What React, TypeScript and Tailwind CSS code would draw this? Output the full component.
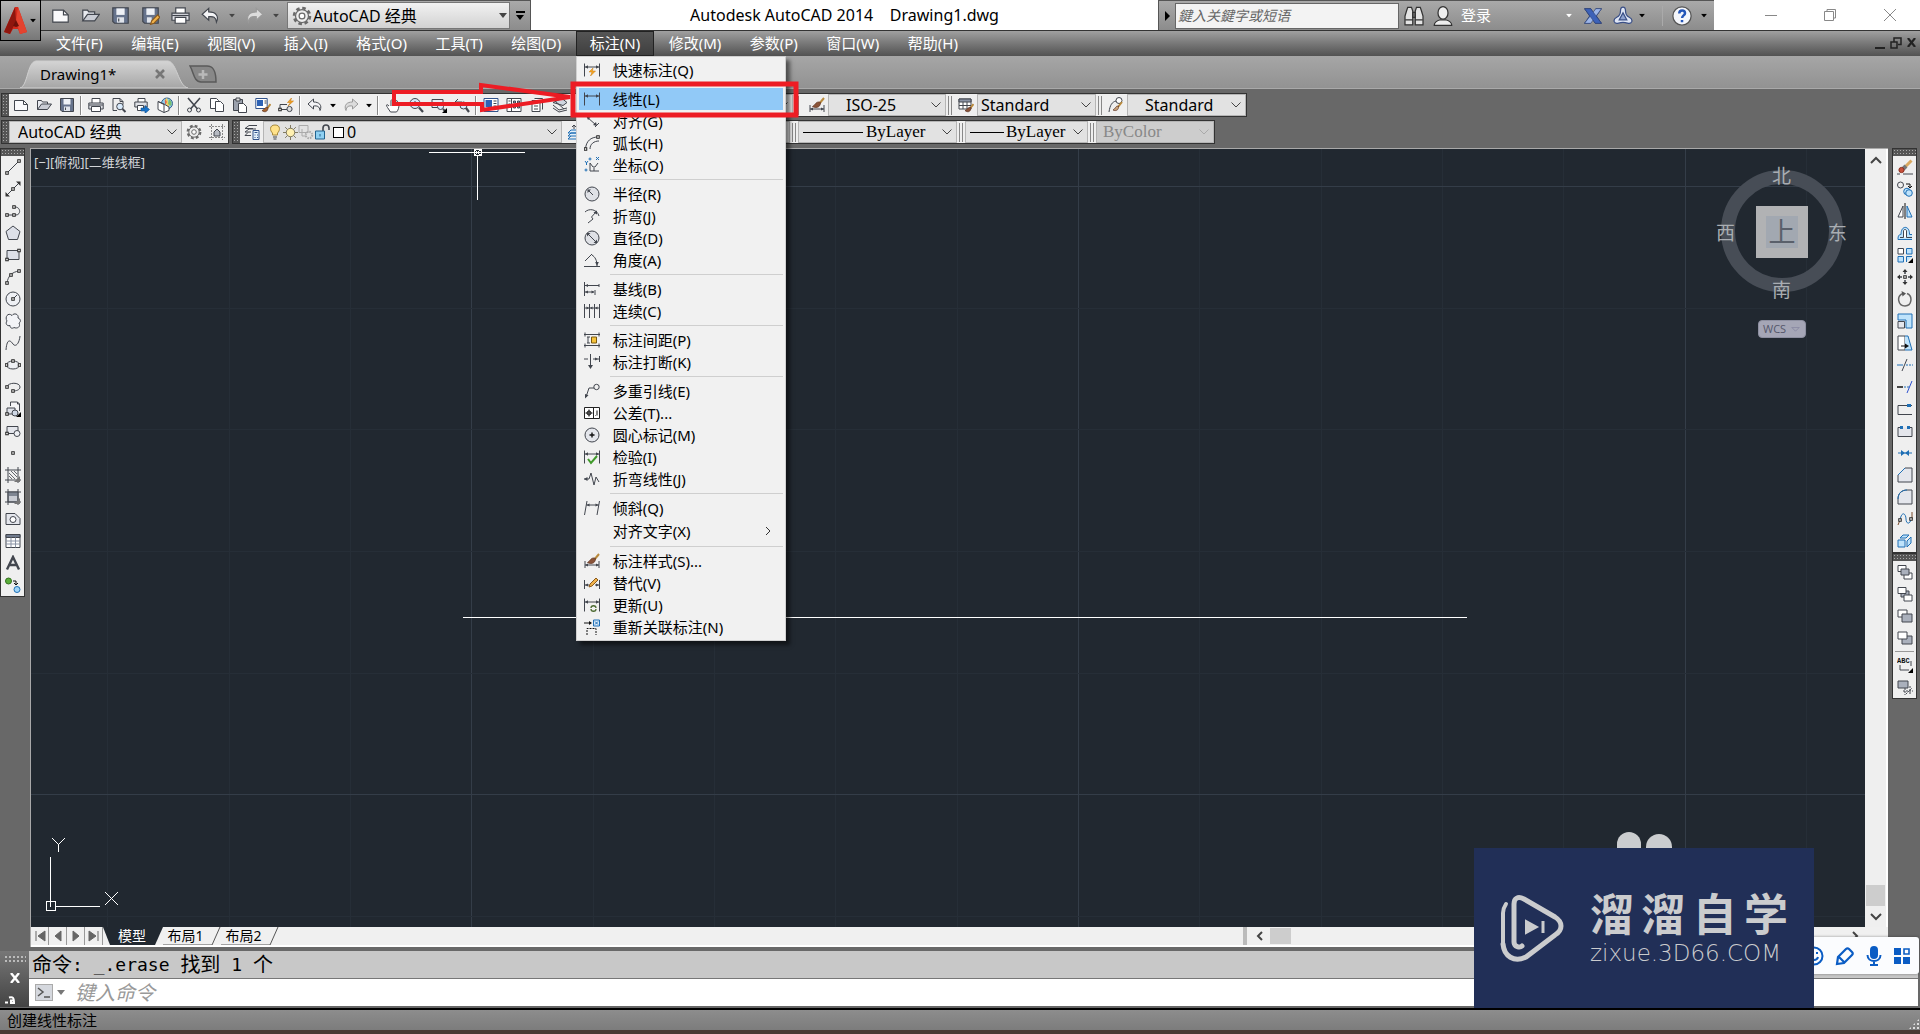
import React from "react";

const K = "#42464e";
const B = "#1f6fb5";
const L = "#bfe3fb";

const Node = ({ x, y }: { x: number; y: number }) => (
  <rect x={x - 1.25} y={y - 1.25} width="2.5" height="2.5" fill="#fff" stroke="#222" strokeWidth="1" />
);

const pageShape = <path d="M1.5 3.5h9l4 4v6h-13z" fill="#fafafc" />;
const dimBars = <path d="M.5 1.500v13M15.500 1.500v13M1 5h14" />;
const dimTips = <path d="M1 5l3-1.800v3.600zM15 5l-3-1.800v3.600z" fill={K} stroke="none" />;
const brush = (
  <>
    <path d="M15 1l-5 6" stroke="#b98a3c" strokeWidth="2" />
    <path d="M11.500 5.500c-4-2-5 2-8 4 2 1.500 8 2 8-4z" fill="#8a5338" stroke="#5d3422" strokeWidth=".7" />
  </>
);

const icons: Record<string, React.ReactNode> = {
  new: (
    <>
      {pageShape}
      <path d="M10.500 3.500v4h4" />
    </>
  ),
  open: (
    <>
      <path d="M1.500 12.500v-9h4l1 1.500h5v2" fill="#e9ebf0" />
      <path d="M1.500 12.500l4-5.500h10l-4 5.500z" fill="#c9ccd4" />
    </>
  ),
  save: (
    <>
      <path d="M1.500 1.500h13v13H3l-1.500-1.500z" fill="#66738c" />
      <path d="M4.500 2h7v5.500h-7z" fill="#eef1f6" stroke="none" />
      <path d="M5 9.500h6V14H5z" fill="#dfe3ea" stroke="none" />
      <path d="M6.500 10.500v2.500" />
    </>
  ),
  saveas: (
    <>
      <path d="M1.500 1.500h13v13H3l-1.500-1.500z" fill="#66738c" />
      <path d="M4.500 2h7v5.500h-7z" fill="#eef1f6" stroke="none" />
      <path d="M5 9.500h4V14H5z" fill="#dfe3ea" stroke="none" />
      <path d="M8 15.500l1-3 5-5 2 2-5 5z" fill="#f0b24a" stroke="#8a5a1e" />
    </>
  ),
  print: (
    <>
      <path d="M4 6V1.500h8V6" fill="#fff" />
      <path d="M.8 6h14.400v6H.8z" fill="#dfe1e6" />
      <path d="M3.500 9.500h9v5h-9z" fill="#fff" />
      <path d="M1 8h14" />
    </>
  ),
  preview: (
    <>
      <path d="M2 1.500h7l3 3v3M2 1.500v12h4" fill="none" />
      <path d="M9 1.500v3h3" />
      <circle cx="9" cy="9.500" r="3.300" fill="#d8eafb" />
      <path d="M11.500 12l3 3" strokeWidth="2" />
    </>
  ),
  publish: (
    <>
      <path d="M4 5V1.500h7V5" fill="#fff" />
      <path d="M.8 5h12.400v5H.8z" fill="#dfe1e6" />
      <path d="M3.500 8.500h6v5h-6z" fill="#fff" />
      <path d="M7 11h4V8.500l4.500 4-4.500 4V14H7z" fill="#1873c9" stroke="#0f4f8f" strokeWidth=".6" />
    </>
  ),
  globe: (
    <>
      <circle cx="10" cy="6.500" r="5.500" fill="#8cc9f2" stroke="#36648c" />
      <path d="M10 1c-3 2-3 4-1 5l1 5c4-1 2-4 0-10z" fill="#f0d060" stroke="none" />
      <path d="M12 2c3 2 3 5 2 7l-3-2z" fill="#78bf70" stroke="none" />
      <path d="M8 2l2 3-2 3z" fill="#e0654a" stroke="none" />
      <path d="M1 4.500l6 2.500 5 3v3.500L7 15.500 1 12.500z" fill="#fff" />
      <path d="M1 4.500l6 3v8" />
    </>
  ),
  cut: (
    <>
      <path d="M2 1l9.500 11M14 1L4.500 12" strokeWidth="1.600" />
      <circle cx="3.500" cy="13" r="2" />
      <circle cx="12.500" cy="13" r="2" />
    </>
  ),
  copy: (
    <>
      <path d="M1.500 1.500h6l2 2v8h-8z" fill="#fff" />
      <path d="M6.500 4.500h5l3 3v7h-8z" fill="#fff" />
    </>
  ),
  paste: (
    <>
      <path d="M1.500 2.500h9v11h-9z" fill="#9aa0ac" />
      <path d="M4 1h4v3H4z" fill="#ddd" />
      <path d="M6.500 6.500h5l3 3v6h-8z" fill="#fff" />
    </>
  ),
  match: (
    <>
      <path d="M.8 1.500h11.400v10H.8z" fill="#fff" stroke="#31528a" />
      <path d="M2 3h6v6H2z" fill="#2d62b5" stroke="none" />
      <path d="M9.500 4h2M9.500 6h2" />
      <path d="M15.500 7l-3 4" stroke="#b98a3c" strokeWidth="2" />
      <path d="M13 10.500c-3-1-3 2-6 3 2 2 6 2 6-3z" fill="#a8642f" stroke="#5d3422" strokeWidth=".7" />
    </>
  ),
  block: (
    <>
      <path d="M2 12.500V7.500h7" />
      <path d="M2 12.500h8" />
      <circle cx="11.500" cy="12" r="2.600" fill="#ddd" />
      <Node x={2} y={12.5} />
      <path d="M13.500 1l-4 4.500h3L10 9l5.500-5h-3z" fill="#f5a623" stroke="#c97a10" strokeWidth=".6" />
    </>
  ),
  undo: <path d="M6.500 2L1 7l5.500 5V9c4-.5 6 .5 6.500 4.500C15.500 8 12 5 6.500 5z" fill="#f4f4f6" />,
  redo: <path d="M9.500 2L15 7l-5.500 5V9c-4-.5-6 .5-6.500 4.500C.5 8 4 5 9.500 5z" fill="#dcdcdc" stroke="#9a9a9a" />,
  pan: <path d="M4 9L2 7.500C1 8 1.500 9 2.500 10.500l3 4.500h6c2-2 2.500-5 2.500-8-1-1-1.700 0-1.700 1.500V4c-1-1-1.800 0-1.800 1v2V2.500c-1-1-1.800 0-1.800 1V7L8 3C7 2 6 3 6 4v5" fill="#fff" />,
  zoomrt: (
    <>
      <circle cx="7" cy="6.500" r="5" fill="#d8eafb" />
      <path d="M11 10.500l4 4.500" strokeWidth="2.200" />
      <path d="M4.500 6.500h5M7 4v5" />
    </>
  ),
  zoomwin: (
    <>
      <path d="M1 2.500h11v8H1z" fill="#e9eef5" />
      <circle cx="9.500" cy="9.500" r="3" fill="#d8eafb" />
      <path d="M12 12l2 2" strokeWidth="2" />
      <path d="M16 11v5h-5z" fill="#000" stroke="none" />
    </>
  ),
  zoomprev: (
    <>
      <path d="M4 2L1 5l3 3M1 5h7" />
      <circle cx="9.500" cy="8.500" r="3.500" fill="#d8eafb" />
      <path d="M12 11l3 4" strokeWidth="2.200" />
    </>
  ),
  props: (
    <>
      <path d="M1 1.500h14v13H1z" fill="#fff" stroke="#31528a" />
      <path d="M2.500 3h6.500v7H2.500z" fill="#2d62b5" stroke="none" />
      <path d="M10.500 4h3M10.500 6.500h3M10.500 9h3M3 12h10" />
    </>
  ),
  dcenter: (
    <>
      <path d="M1 1.500h14v13H1z" fill="#fff" />
      <path d="M5.500 1.500v13M2.500 4h2M2.500 7h2M2.500 10h2" />
      <path d="M7.500 4h2v2h-2zM11.500 4h2v2h-2zM7.500 9h2v2h-2zM11.500 9h2v2h-2z" fill="#9ab" />
    </>
  ),
  palette: (
    <>
      <path d="M3 3.500h8v11H3zM5.500 1.500h8v11" fill="#fff" />
      <path d="M5 6h4M5 9h4M5 12h4" />
    </>
  ),
  sheet: (
    <>
      <path d="M1 5.500l9-4 5 4-4 3z" fill="#cfd6e0" />
      <path d="M1 8l6 5 8-2M1 11l6 4 8-2M3 4l9 8" />
    </>
  ),
  help: (
    <>
      <circle cx="8" cy="8" r="6.500" fill="#fff" />
      <path d="M6 6.500c0-3 4-3 4-.5 0 1.500-2 1.500-2 3.500M8 11v1.500" stroke={B} strokeWidth="1.700" />
    </>
  ),
  dimstyle: (
    <>
      <path d="M1 8v7M15 8v7M1 12h14" />
      <path d="M1 12l3-1.600v3.200zM15 12l-3-1.600v3.200z" fill={K} stroke="none" />
      {brush}
    </>
  ),
  tablestyle: (
    <>
      <path d="M1 2h12v10H1z" fill="#fff" />
      <path d="M1 2h12v3H1z" fill="#8a93a5" />
      <path d="M1 8.500h12M5 5v7M9 5v7" />
      <path d="M15.500 7l-3 4" stroke="#b98a3c" strokeWidth="2" />
      <path d="M13 10.500c-3-1-3 2-6 3 2 2 6 2 6-3z" fill="#8a5338" stroke="#5d3422" strokeWidth=".7" />
    </>
  ),
  leaderstyle: (
    <>
      <path d="M1 15C2 8 4 5 8 4" />
      <circle cx="11" cy="3.500" r="3" fill="#fff" />
      <path d="M14 5l-4 5" stroke="#b98a3c" strokeWidth="2" />
      <path d="M10.500 9c-3-.5-3 3-5.500 4 3 1.500 6 0 5.500-4z" fill="#c9a27a" stroke="#5d3422" strokeWidth=".7" />
    </>
  ),
  gear: (
    <>
      <circle cx="8" cy="8" r="6.300" fill="none" stroke="#6a6a6a" strokeWidth="2.200" strokeDasharray="2.800 2.150" />
      <circle cx="8" cy="8" r="5.200" fill="#eee" stroke="#6a6a6a" />
      <circle cx="8" cy="8" r="2.300" fill="#fff" stroke="#6a6a6a" />
    </>
  ),
  wsbox: (
    <>
      <path d="M2.500 0v16M13.500 0v16M0 2.500h16M0 13.500h16" stroke="#888" strokeDasharray="2 1" />
      <path d="M5 8l3-3 3 3v4H5z" fill="#b6bac2" />
    </>
  ),
  layers: (
    <>
      <path d="M1 4.500l4-3h8M1 4.500h8M1 8l4-3h7M1 8h6M1 11.500l3-3M1 11.500h6" />
      <path d="M9 6.500h6v9H9z" fill="#e4f1fb" stroke="#31528a" />
      <path d="M10.500 8.500h3M10.500 11h1M13 11h1M10.500 13.500h1M13 13.500h1" stroke="#31528a" />
    </>
  ),
  layerprev: (
    <>
      <path d="M2 12l3-3h9l-3 3zM2 15l3-3M14 12l-3 3H2M2 9l3-3h9l-3 3z" stroke={B} fill="#e4f1fb" />
      <path d="M8 1v4M6 3l2-2 2 2" />
    </>
  ),
  bulb: (
    <>
      <path d="M8 1c-6 0-5 6-2.500 8v2h5V9C13 7 14 1 8 1z" fill="#ffe28a" stroke="#a88a3c" />
      <path d="M6 13h4M6.500 15h3" />
    </>
  ),
  sun: (
    <>
      <path d="M8 0v16M0 8h16M2.300 2.300l11.400 11.400M13.700 2.300L2.300 13.700" stroke="#7a735a" />
      <circle cx="8" cy="8" r="4.500" fill="#fff0b0" stroke="#7a735a" />
    </>
  ),
  vpfreeze: (
    <>
      <path d="M1 1.500h9v7H1zM4 5v7h4" stroke="#aaa" />
      <circle cx="11" cy="11" r="3.200" stroke="#aaa" strokeWidth="2" strokeDasharray="1.500 1" />
    </>
  ),
  lock: (
    <>
      <path d="M9 7V4c0-4 6-4 6 0v2" strokeWidth="1.600" />
      <path d="M1.500 7h9v8h-9z" fill="#8fd0f2" stroke="#22638f" />
      <path d="M6 10v2.500" stroke="#22638f" />
    </>
  ),
  line: (
    <>
      <path d="M2 14L14 2" />
      <Node x={2} y={14} />
      <Node x={14} y={2} />
    </>
  ),
  xline: (
    <>
      <path d="M1 15L15 1" />
      <path d="M.5 15.500v-4.500l4.500 4.500zM15.500.5v4.500L11 .5z" fill="#333" stroke="none" />
      <Node x={8} y={8} />
    </>
  ),
  pline: (
    <>
      <path d="M2 12h9c5 0 5-8-1-8" />
      <Node x={2} y={12} />
      <Node x={9} y={12} />
      <Node x={9} y={4} />
    </>
  ),
  polygon: <path d="M8 1l7 5.500-2.500 8h-9L1 6.500z" fill="#dde0e8" />,
  rect: (
    <>
      <path d="M2 3.500h12v9H2z" fill="#dde0e8" />
      <Node x={2} y={12.5} />
      <Node x={14} y={3.5} />
    </>
  ),
  arc: (
    <>
      <path d="M2 14C3 7 7 3 14 2" />
      <Node x={2} y={14} />
      <Node x={6} y={6} />
      <Node x={14} y={2} />
    </>
  ),
  circle: (
    <>
      <circle cx="8" cy="8" r="7" fill="#eef0f4" />
      <path d="M8 8l4-4" />
      <Node x={8} y={8} />
    </>
  ),
  cloud: <path d="M7 2.500C9-.5 14 1 13 5c3 1 3 4 1 5 2 4-2 6-5 4.500-2 1.500-4 .5-4-2-3 1-5-2-3-4.500C-.5 4 3-1 7 2.500z" fill="#f3f4f7" />,
  spline: <path d="M1 15C2 2 6 6 8 9s6 1 7-8" />,
  ellipse: (
    <>
      <ellipse cx="8" cy="8" rx="6.500" ry="4" fill="#eef0f4" />
      <Node x={1.5} y={8} />
      <Node x={14.5} y={8} />
      <Node x={8} y={4} />
    </>
  ),
  ellarc: (
    <>
      <path d="M2 8c1-5 13-5 13 0 0 3-4 4-7 4" />
      <Node x={2} y={8} />
      <Node x={8} y={12} />
    </>
  ),
  insblock: (
    <>
      <path d="M5.500 5V1h7l2 2v7M12.500 1v2h2" fill="#f4f4f6" />
      <path d="M2 7h8v6H2z" fill="#dde0e8" />
      <circle cx="10" cy="12" r="3" fill="#cfd8e6" />
      <Node x={2} y={13} />
      <path d="M16 11v5h-5z" fill="#000" stroke="none" />
    </>
  ),
  mkblock: (
    <>
      <path d="M2 3.500h11v7H2z" fill="#e4e6ec" />
      <circle cx="12" cy="10.500" r="3" fill="#eef0f4" />
      <Node x={2} y={10.5} />
    </>
  ),
  point: <Node x={8} y={8} />,
  hatch: (
    <>
      <path d="M3 0v16M0 3h16M13 0v16M0 13h16" />
      <path d="M4 6l6 6M4 9l3 3M6 4l6 6M9 4l3 3" strokeWidth=".8" />
      <path d="M15 9v6H9z" fill="#777" stroke="none" />
    </>
  ),
  gradient: (
    <>
      <path d="M3 3h10v10H3z" fill="#c9ccd3" />
      <path d="M3 3h10v4H3z" fill="#7f8692" stroke="none" />
      <path d="M3 0v16M0 3h16M13 0v16M0 13h16" />
      <path d="M15 9v6H9z" fill="#777" stroke="none" />
    </>
  ),
  region: (
    <>
      <path d="M1 2.500h9l5 5v6H1z" fill="#e4e6ec" />
      <circle cx="8" cy="8.500" r="3" fill="#fff" />
    </>
  ),
  table: (
    <>
      <path d="M1 1.500h14v13H1z" fill="#fff" />
      <path d="M1 1.500h14v3H1z" fill="#707a8c" />
      <path d="M1 8h14M1 11h14M6 4.500v10M10.500 4.500v10" stroke="#8a93a5" />
    </>
  ),
  mtext: <path d="M2 14.500L8 2l6 12.500M4.500 10h7" strokeWidth="2.400" />,
  addsel: (
    <>
      <circle cx="3.500" cy="4" r="3" fill="#5aae3a" stroke="#33701d" />
      <circle cx="12" cy="12.500" r="3" fill="#9fd4f7" stroke={B} />
      <path d="M8 4h3v3M9 6l2 2 2-2" stroke="#111" />
    </>
  ),
  erase: (
    <>
      <path d="M14.500 1.500L8 8" stroke="#d9a860" strokeWidth="3" />
      <path d="M9 7l-3 3" stroke="#777" strokeWidth="4" />
      <circle cx="4.500" cy="11" r="2.600" fill="#c9503a" stroke="#8a2f1e" />
      <path d="M0 15h3M6 15h10" />
    </>
  ),
  copyobj: (
    <>
      <circle cx="3.500" cy="4" r="3" />
      <circle cx="10" cy="10.500" r="3.300" fill={L} stroke={B} />
      <circle cx="12" cy="12" r="3.300" fill={L} stroke={B} />
      <path d="M9 3h4v3M11 5l2 2 2-2" stroke="#111" />
    </>
  ),
  mirror: (
    <>
      <path d="M6 3v11H1z" fill="#fff" />
      <path d="M8 0v16" stroke="#111" />
      <path d="M10 3v11h5z" fill={L} stroke={B} />
    </>
  ),
  offset: (
    <>
      <path d="M15 14.500H1c0-4 1-5 3-5 0-10 9-9 8.500 0H15" stroke={B} fill={L} />
      <path d="M3 12.500h3.500V6c0-2 3-2 3 0v6.500H15" stroke={K} fill="#fff" />
    </>
  ),
  array: (
    <>
      <path d="M1 1.500h5.500v5.500H1z" fill="#fff" />
      <path d="M9.500 1.500H15v5.500H9.500zM1 9.500h5.500V15H1zM9.500 15V9.500H15" fill={L} stroke={B} />
      <path d="M16 11v5h-5z" fill="#000" stroke="none" />
    </>
  ),
  move: (
    <>
      <path d="M8 1v4M8 11v4M1 8h4M11 8h4" strokeWidth="1.500" />
      <path d="M8 0l2.500 3h-5zM8 16l2.500-3h-5zM0 8l3-2.500v5zM16 8l-3-2.500v5z" fill="#333" stroke="none" />
      <Node x={8} y={8} />
    </>
  ),
  rotate: (
    <>
      <path d="M6 2.500C-1 5 1 15 8 15S16 5 10 2.500" stroke="#666" strokeWidth="1.500" />
      <path d="M4.500 0l4.500 2.500-3.500 3z" fill="#555" stroke="none" />
    </>
  ),
  scale: (
    <>
      <path d="M1 1h14v14H9V7H1z" fill={L} stroke={B} />
      <path d="M1 8.500h6.500V15H1z" fill="#e4e6ec" />
    </>
  ),
  stretch: (
    <>
      <path d="M1 1h7v14H1z" fill="#fff" />
      <path d="M8 1h3l4 14H8" fill={L} stroke={B} />
      <path d="M4 11h5" stroke="#111" />
      <path d="M12 11L8 8.500v5z" fill="#111" stroke="none" />
    </>
  ),
  trim: (
    <>
      <path d="M0 8h6" stroke={B} />
      <path d="M9 8h7" strokeDasharray="2 1" stroke={B} />
      <path d="M10 2L5 14" />
    </>
  ),
  extend: (
    <>
      <path d="M0 8h6" stroke="#111" strokeWidth="1.500" />
      <path d="M7 8h5" strokeDasharray="2 1" stroke={B} />
      <path d="M15 2l-5 12" stroke="#2b4fd0" />
    </>
  ),
  breakpt: (
    <>
      <path d="M15 4.500H1v9h14" />
      <path d="M10 3h4v3h-4z" fill={B} stroke="none" />
    </>
  ),
  breakobj: (
    <>
      <path d="M3 4.500H1v9h14v-9h-2" fill="#e4e6ec" />
      <path d="M3 3h3v3H3zM10 3h3v3h-3z" fill={B} stroke="none" />
    </>
  ),
  join: (
    <>
      <path d="M1 8h14" stroke={B} />
      <path d="M8 8L4 5v6zM8 8l4-3v6z" fill={B} stroke="none" />
    </>
  ),
  chamfer: (
    <>
      <path d="M1 8l7-7h7v14H1z" fill="#e4e6ec" />
      <path d="M1 8l7-7" stroke={B} />
    </>
  ),
  fillet: (
    <>
      <path d="M1 10C1 4 5 1 10 1h5v14H1z" fill="#e4e6ec" />
      <path d="M1 10C1 4 5 1 10 1" stroke={B} />
    </>
  ),
  blend: (
    <>
      <path d="M1 14l2-5M15 1v7" stroke="#7a4a2a" />
      <path d="M3 9C5-1 9 3 9 8s4 6 5 0" stroke={B} />
      <Node x={3} y={9} />
      <Node x={14} y={8} />
    </>
  ),
  explode: (
    <path d="M1 7h7v7H1zM3 5l3-3h6l-3 3zM10 8l4-4v6l-4 4z" fill={L} stroke={B} />
  ),
  front: (
    <>
      <path d="M1 1.500h8v6H1zM7 9h8v6H7z" fill="#fff" />
      <path d="M4 5h8v6H4z" fill="#aab0bc" />
    </>
  ),
  back: (
    <>
      <path d="M4 5h8v6H4z" fill="#aab0bc" />
      <path d="M1 1.500h8v6H1zM7 9h8v6H7z" fill="#fff" />
    </>
  ),
  above: (
    <>
      <path d="M1 2h9v7H1z" fill="#fff" />
      <path d="M5 6h10v8H5z" fill="#aab0bc" />
    </>
  ),
  under: (
    <>
      <path d="M5 6h10v8H5z" fill="#aab0bc" />
      <path d="M1 2h9v7H1z" fill="#fff" />
    </>
  ),
  textfront: (
    <>
      <path d="M3 8v5h9M14 4v5" />
      <path d="M16 11v5h-5z" fill="#000" stroke="none" />
      <text x="0" y="6" fontSize="7" fontWeight="700" fill="#111" stroke="none" fontFamily="Liberation Mono, monospace">
        ABC
      </text>
    </>
  ),
  hatchback: (
    <>
      <path d="M1 2h10v7H1z" fill="#aab0bc" />
      <path d="M6 12h10M8 9v7M13 7v9M9 15l6-6" strokeDasharray="2 1" />
    </>
  ),
  quick: (
    <>
      {dimBars}
      {dimTips}
      <path d="M9 6l-4 4h3l-1.500 4L11.500 9h-3z" fill="#f5a623" stroke="#c97a10" strokeWidth=".5" />
    </>
  ),
  linear: (
    <>
      {dimBars}
      {dimTips}
    </>
  ),
  aligned: (
    <>
      <path d="M1 4l3-3M11 14l4-4M3 4l9 8" />
      <path d="M2.500 3.500l4 1-2.500 2.500zM13 13l-1-4-3 3z" fill={K} stroke="none" />
    </>
  ),
  arclen: (
    <>
      <path d="M1.500 14C2 6 7 2 14 2M6 14c0-5 4-8 9-8" />
      <Node x={1.5} y={14} />
      <Node x={14} y={2} />
    </>
  ),
  ordinate: (
    <>
      <path d="M6 6v8h9M6 6l3 4h2l3-4M10 14v-3" />
      <path d="M1 4l1.500 2L4 4M2.500 6v2M12 0l3 3M15 0l-3 3" stroke={B} />
      <circle cx="6" cy="2" r="1" stroke={B} />
      <circle cx="2" cy="13" r="1" stroke={B} />
    </>
  ),
  radius: (
    <>
      <circle cx="8" cy="8" r="7" fill="#dfe1e6" />
      <path d="M9 9L4 4" />
      <path d="M3.500 3.500h3.500L3.500 7z" fill={K} stroke="none" />
    </>
  ),
  jogged: (
    <>
      <path d="M1 4C5 0 13 1 15 8M4 15l5-4-1.500-2L12 4" />
      <path d="M13 2.500v4l-3.500-2z" fill={K} stroke="none" />
    </>
  ),
  diameter: (
    <>
      <circle cx="8" cy="8" r="7" fill="#dfe1e6" />
      <path d="M4 4l8 8" />
      <path d="M3 3h3.500L3 6.500zM13 13H9.500L13 9.500z" fill={K} stroke="none" />
    </>
  ),
  angular: (
    <>
      <path d="M0 14.500h16M1 9l7-7M8 3c3 2 5 5 5 11" />
      <path d="M13 14l-1.800-4h3.600z" fill={K} stroke="none" />
    </>
  ),
  baseline: (
    <>
      <path d="M.5 1v14M1 4.500h14M1 11h9M11 9v5M15 3v3" />
      <path d="M1 4.500l3-1.500v3zM1 11l3-1.500v3zM10.500 11l-3-1.500v3z" fill={K} stroke="none" />
    </>
  ),
  cont: (
    <>
      <path d="M.5 1v14M5.500 1v14M10.500 1v14M15.500 1v14M1 5h14" />
      <path d="M5 5L2.500 3.500v3zM6 5l2.500-1.500v3zM11 5l2.500-1.500v3z" fill={K} stroke="none" />
    </>
  ),
  space: (
    <>
      <path d="M0 2.500h16M0 13.500h16M1 .5v4M15 .5v4M1 11.500v4M15 11.500v4M4 5v6M3 5h3M3 11h3" />
      <path d="M7.500 5h5v6h-5z" fill="#f5c23a" stroke="#7a5a10" />
    </>
  ),
  dimbreak: (
    <>
      <path d="M0 5h4M9 5h7M15.500 2v6M6.500 0v12" />
      <path d="M6.500 15L4 11h5zM14 5l-3-1.500v3z" fill={K} stroke="none" />
    </>
  ),
  mleader: (
    <>
      <path d="M2 14L5 5h5" />
      <circle cx="12.500" cy="4" r="2.700" />
      <path d="M1 15.500v-4.500l3.500 1.200z" fill={K} stroke="none" />
    </>
  ),
  tolerance: (
    <>
      <path d="M.5 2.500h15v11H.5zM9.500 2.500v11" fill="#fff" stroke="#222" />
      <circle cx="5" cy="8" r="2" stroke="#111" />
      <path d="M5 4.500v7M1.500 8h7M13 5.500v5M11 10.500h.5" stroke="#111" />
    </>
  ),
  center: (
    <>
      <circle cx="8" cy="8" r="7" fill="#e4e6ec" />
      <path d="M8 5.500v5M5.500 8h5" stroke="#111" strokeWidth="1.400" />
    </>
  ),
  inspect: (
    <>
      {dimBars}
      {dimTips}
      <path d="M4 10l3 4 6-7" stroke="#3f9a2a" strokeWidth="2" />
    </>
  ),
  joglinear: (
    <>
      <path d="M0 8h5l2-6 3 12 2-8 3 5" />
      <path d="M0 8l3.500-2v4z" fill={K} stroke="none" />
    </>
  ),
  oblique: (
    <>
      <path d="M3 1L.5 15M15.500 1L13 15M2.500 5H15" />
      <path d="M2.500 5l3-1.500v3zM14.500 5l-3-1.500v3z" fill={K} stroke="none" />
    </>
  ),
  override: (
    <>
      <path d="M.5 5v9M15.500 5v9M1 10h4M11 10h4" />
      <path d="M1 10l3-1.500v3zM15 10l-3-1.500v3z" fill={K} stroke="none" />
      <path d="M5 12l1-3 6-6 2 2-6 6z" fill="#f0b24a" stroke="#8a5a1e" />
    </>
  ),
  update: (
    <>
      {dimBars}
      {dimTips}
      <path d="M7 11c0-3 5-3 5 0M12 12c0 3-5 3-5 0" stroke="#4d6b33" strokeWidth="1.300" />
    </>
  ),
  reassoc: (
    <>
      <path d="M0 4h7" stroke="#111" />
      <path d="M8 4L5 2v4z" fill="#111" stroke="none" />
      <path d="M9.500 1h6v6h-6z" fill="#d8eafb" stroke={B} />
      <path d="M11 2.500l3 3M14 2.500l-3 3" stroke={B} />
      <path d="M3 16V9.500h9V16" stroke="#111" strokeDasharray="2 1" />
    </>
  ),
  binoc: (
    <>
      <path d="M2 4l1-3h3l1 3v11H.8V8zM14 4l-1-3h-3L9 4v11h6.200V8z" fill="#e4e4e4" stroke="#333" />
      <path d="M7 5h2v4H7zM1 11h6M9 11h6" stroke="#333" />
    </>
  ),
  user: (
    <>
      <ellipse cx="8" cy="5.500" rx="4" ry="5" fill="#eee" stroke="#333" />
      <path d="M1 15.500c0-3 3-4 5-4.500h4c2 .5 5 1.500 5 4.500z" fill="#eee" stroke="#333" />
    </>
  ),
  exchange: (
    <>
      <path d="M.5 1.500H6l2.500 4 2-4h5L11 8l4.500 6.500H10l-2.500-4-2 4h-5L5 8z" fill="#4a6fc0" stroke="#2c3f70" strokeWidth=".8" />
      <path d="M10.500 1.500h5L6 14.500H.5z" fill="#9db6e8" stroke="#2c3f70" strokeWidth=".5" />
      <path d="M.5 1.500H6l9.500 13H10z" fill="#3d62b8" stroke="#2c3f70" strokeWidth=".5" />
    </>
  ),
  a360: (
    <>
      <path d="M8 .8c1.500 0 2 1.200 2 3s.8 4.200 3 5.200c2 1 2.500 2 2 3.500-.6 1.500-2 1.700-3.500 1.200-2-.7-5-.7-7 0-1.500.5-2.900.3-3.500-1.200-.5-1.500 0-2.500 2-3.500 2.200-1 3-3.400 3-5.200s.5-3 2-3z" fill="#dfe6f5" stroke="#3a4f86" />
      <path d="M8 5.500l3 5.500H5z" fill="#8ea2cf" stroke="#3a4f86" />
    </>
  ),
  helpround: (
    <>
      <circle cx="8" cy="8" r="7.300" fill="#f4f6fb" stroke="#555" />
      <path d="M5.800 6c0-3.300 4.600-3 4.600-.3 0 1.800-2.300 1.800-2.300 3.800M8 11.200v1.800" stroke="#2456b8" strokeWidth="2" />
    </>
  ),
};

function Icon({ name, className = "size-4" }: { name: string; className?: string }) {
  return (
    <svg viewBox="0 0 16 16" className={`${className} shrink-0`} fill="none" stroke={K} strokeWidth="1" aria-hidden="true">
      {icons[name]}
    </svg>
  );
}

const Tri = ({ className = "text-[#444]" }: { className?: string }) => (
  <svg viewBox="0 0 8 5" className={`h-[5px] w-2 ${className}`} aria-hidden="true">
    <path d="M0 0h8L4 5z" fill="currentColor" />
  </svg>
);

function Tool({ name, label }: { name: string; label: string }) {
  return (
    <button aria-label={label} className="flex h-[22px] w-[23px] shrink-0 items-center justify-center">
      <Icon name={name} />
    </button>
  );
}

const Sep = () => <span className="mx-[2px] h-[19px] w-[2px] shrink-0 border-l border-[#888] bg-white" />;
const Bars = () => <span className="mx-[2px] h-[19px] w-1 shrink-0 border-x border-[#888]" />;
const Grip = () => (
  <span className="h-full w-[7px] shrink-0 bg-[#555] bg-[radial-gradient(#aaa_1px,transparent_1px)] bg-[length:3px_3px]" />
);
const TopGrip = () => (
  <span className="h-[7px] w-full shrink-0 bg-[#555] bg-[radial-gradient(#aaa_1px,transparent_1px)] bg-[length:3px_3px]" />
);

const Chevron = ({ className = "text-[#444]" }: { className?: string }) => (
  <svg viewBox="0 0 10 6" className={`pointer-events-none h-[6px] w-[10px] shrink-0 ${className}`} fill="none" stroke="currentColor" aria-hidden="true">
    <path d="M.5.5L5 5 9.500.5" />
  </svg>
);

function Combo({
  label,
  value,
  className,
  before,
  textClass = "text-[16px] text-black",
  chevron,
}: {
  label: string;
  value: string;
  className: string;
  before?: React.ReactNode;
  textClass?: string;
  chevron?: string;
}) {
  return (
    <label className={`flex h-full shrink-0 items-center border border-[#b5b5b5] pr-1 ${className}`}>
      {before}
      <select aria-label={label} className={`min-w-0 flex-1 appearance-none bg-transparent outline-none ${textClass}`} defaultValue={value}>
        <option>{value}</option>
      </select>
      <Chevron className={chevron} />
    </label>
  );
}

const bar = "flex h-[24px] items-center border border-[#333] bg-[#efefef]";

const menus = ["文件(F)", "编辑(E)", "视图(V)", "插入(I)", "格式(O)", "工具(T)", "绘图(D)", "标注(N)", "修改(M)", "参数(P)", "窗口(W)", "帮助(H)"];

const menuGroups: [string, string][][] = [
  [["quick", "快速标注(Q)"]],
  [
    ["linear", "线性(L)"],
    ["aligned", "对齐(G)"],
    ["arclen", "弧长(H)"],
    ["ordinate", "坐标(O)"],
  ],
  [
    ["radius", "半径(R)"],
    ["jogged", "折弯(J)"],
    ["diameter", "直径(D)"],
    ["angular", "角度(A)"],
  ],
  [
    ["baseline", "基线(B)"],
    ["cont", "连续(C)"],
  ],
  [
    ["space", "标注间距(P)"],
    ["dimbreak", "标注打断(K)"],
  ],
  [
    ["mleader", "多重引线(E)"],
    ["tolerance", "公差(T)..."],
    ["center", "圆心标记(M)"],
    ["inspect", "检验(I)"],
    ["joglinear", "折弯线性(J)"],
  ],
  [
    ["oblique", "倾斜(Q)"],
    ["", "对齐文字(X)"],
  ],
  [
    ["dimstyle", "标注样式(S)..."],
    ["override", "替代(V)"],
    ["update", "更新(U)"],
    ["reassoc", "重新关联标注(N)"],
  ],
];

function DimensionMenu() {
  return (
    <div className="absolute top-full left-0 z-20 w-[210px] border border-[#d0d0d0] bg-[#f1f1f1] px-[2px] pt-[2px] pb-[2px] text-black shadow-[4px_4px_4px_rgba(0,0,0,0.5)]">
      {menuGroups.map((group, i) => (
        <ul key={i}>
          {i > 0 && <li role="separator" className="mt-[3px] mb-[3px] ml-[31px] h-px bg-[#cfcfcf]" />}
          {group.map(([icon, label]) => (
            <li key={label}>
              <button
                className={`flex w-full items-center pl-[5px] text-left text-[15px] ${icon ? "h-[22px]" : "h-6"} ${
                  icon === "linear" ? "bg-[#91c9f7]" : ""
                }`}
              >
                {icon ? <Icon name={icon} /> : <span className="w-4" />}
                <span className="ml-[13px] flex-1 leading-[22px]">{label}</span>
                {!icon && (
                  <svg viewBox="0 0 6 10" className="mr-3 h-[10px] w-[6px]" fill="none" stroke="#333">
                    <path d="M1 1l4 4-4 4" />
                  </svg>
                )}
              </button>
            </li>
          ))}
        </ul>
      ))}
    </div>
  );
}

function TitleBar() {
  const qat: [string, string][] = [
    ["new", "新建"],
    ["open", "打开"],
    ["save", "保存"],
    ["saveas", "另存为"],
    ["print", "打印"],
    ["undo", "放弃"],
  ];
  return (
    <div className="flex h-[30px] bg-white">
      <div className="flex items-center border-t border-[#555] bg-linear-to-b from-[#a9a9a9] to-[#8c8c8c] pl-[45px]">
        {qat.map(([n, l]) => (
          <button key={n} aria-label={l} className="flex w-[30px] justify-center">
            <Icon name={n} className="size-[19px]" />
          </button>
        ))}
        <button aria-label="放弃列表" className="flex w-[14px] justify-center">
          <Tri className="scale-75 text-[#444]" />
        </button>
        <button aria-label="重做" className="flex w-[30px] justify-center">
          <Icon name="redo" className="size-[19px]" />
        </button>
        <button aria-label="重做列表" className="mr-[4px] flex w-[14px] justify-center">
          <Tri className="scale-75 text-[#444]" />
        </button>
        <label className="flex h-[27px] w-[223px] items-center border border-[#777] bg-linear-to-b from-[#f2f2f2] to-[#d2d2d2] pr-[2px] pl-1">
          <Icon name="gear" className="size-[20px]" />
          <select aria-label="工作空间" className="min-w-0 flex-1 appearance-none bg-transparent pl-px text-[16px] text-black outline-none">
            <option>AutoCAD 经典</option>
          </select>
          <Tri />
        </label>
        <button aria-label="自定义快速访问工具栏" className="flex h-full w-[21px] flex-col items-center justify-center gap-[2px] border-r border-[#555]">
          <span className="h-[2px] w-[9px] bg-black" />
          <Tri className="text-black" />
        </button>
      </div>
      <h1 className="flex-1 text-center text-[16px] leading-[30px] whitespace-pre text-black">{"Autodesk AutoCAD 2014    Drawing1.dwg"}</h1>
      <div className="flex items-center border-t border-[#555] bg-linear-to-b from-[#a9a9a9] to-[#8c8c8c]">
        <button aria-label="展开搜索" className="flex h-full w-[17px] items-center justify-center border-l border-[#555]">
          <svg viewBox="0 0 5 10" className="h-[10px] w-[5px]">
            <path d="M0 0l5 5-5 5z" />
          </svg>
        </button>
        <input
          aria-label="搜索"
          placeholder="鍵入关鍵字或短语"
          className="h-[26px] w-[224px] border border-[#666] bg-[#f3f3f3] px-[2px] text-[14px] italic outline-none placeholder:text-[#666]"
        />
        <button aria-label="查找" className="flex w-[30px] justify-center">
          <Icon name="binoc" className="size-[20px]" />
        </button>
        <button className="flex items-center pl-[4px] text-[15px] text-white">
          <Icon name="user" className="size-[20px]" />
          <span className="w-[112px] pl-2 text-left">登录</span>
          <Tri className="scale-75" />
        </button>
        <button aria-label="Exchange" className="flex w-[40px] justify-center">
          <Icon name="exchange" className="size-[18px]" />
        </button>
        <button aria-label="Autodesk 360" className="flex w-[37px] items-center gap-[5px]">
          <Icon name="a360" className="size-[20px]" />
          <Tri className="scale-75" />
        </button>
        <button aria-label="帮助" className="ml-3 flex w-[52px] items-center gap-2 border-l border-[#aaa] pl-[9px]">
          <Icon name="helpround" className="size-[20px]" />
          <Tri className="scale-75" />
        </button>
      </div>
      <div className="flex w-[206px] items-center justify-around pl-[27px] text-[#888]">
        <button aria-label="最小化" className="flex size-6 items-center justify-center">
          <span className="h-px w-3 bg-[#888]" />
        </button>
        <button aria-label="还原" className="flex size-6 items-center justify-center">
          <svg viewBox="0 0 12 12" className="size-3" fill="none" stroke="currentColor">
            <path d="M.5 2.500h9v9h-9zM3 2.500v-2h8.500V9h-2" />
          </svg>
        </button>
        <button aria-label="关闭" className="flex size-6 items-center justify-center">
          <svg viewBox="0 0 12 12" className="size-3" fill="none" stroke="currentColor">
            <path d="M0 0l12 12M12 0L0 12" />
          </svg>
        </button>
      </div>
    </div>
  );
}

function MenuBar() {
  return (
    <nav className="flex h-[26px] items-stretch justify-between border-t border-[#333] bg-linear-to-b from-[#a0a0a0] to-[#525252] pl-[42px]">
      <div className="flex w-[930px] justify-between">
        {menus.map((m) => (
          <div key={m} className="relative flex">
            <button
              className={`border px-[13px] pb-[2px] text-[15px] leading-[22px] text-white ${
                m === "标注(N)" ? "border-[#222] bg-linear-to-b from-[#555] to-[#3f3f3f]" : "border-transparent"
              }`}
            >
              {m}
            </button>
            {m === "标注(N)" && (
              <>
                <DimensionMenu />
                <svg className="pointer-events-none absolute top-[24px] -left-[190px] z-30 h-[70px] w-[420px]" fill="none" stroke="#ed1c24" strokeWidth="5" aria-hidden="true">
                  <rect x="187" y="29" width="223" height="31" />
                  <path d="M8 37h87v-7l89 12-88 13v-6H8z" strokeWidth="4" />
                </svg>
              </>
            )}
          </div>
        ))}
      </div>
      <div className="flex items-center gap-[5px] pr-1 pb-[2px] text-[#222]">
        <button aria-label="最小化图形" className="flex h-3 w-[10px] items-end">
          <span className="h-[2px] w-full bg-[#222]" />
        </button>
        <button aria-label="还原图形">
          <svg viewBox="0 0 12 12" className="size-3" fill="none" stroke="currentColor" strokeWidth="1.500">
            <path d="M1 5h6v6H1zM4 4.500V1h7v6.500H8" />
          </svg>
        </button>
        <button aria-label="关闭图形">
          <svg viewBox="0 0 10 10" className="size-[9px]" fill="none" stroke="currentColor" strokeWidth="2.400">
            <path d="M1 0l8 10M9 0L1 10" />
          </svg>
        </button>
      </div>
    </nav>
  );
}

function FileTabs() {
  return (
    <div className="flex h-[33px] items-end border-b border-[#a9a9a9] bg-linear-to-b from-[#a6a6a6] to-[#929292] pl-[20px]">
      <div className="relative h-7 w-[168px]">
        <svg viewBox="0 0 168 28" className="absolute inset-0 h-full w-full" aria-hidden="true">
          <defs>
            <linearGradient id="tabFill" x1="0" y1="0" x2="0" y2="1">
              <stop offset="0" stopColor="#d4d4d4" />
              <stop offset="1" stopColor="#a6a6a6" />
            </linearGradient>
          </defs>
          <path d="M0 28C8 26 7 2 16 1h132c9 1 10 25 20 27z" fill="url(#tabFill)" stroke="#d0d0d0" />
        </svg>
        <div className="relative flex h-full items-center pl-[20px] text-[15px] text-black">
          <span className="w-[115px]">Drawing1*</span>
          <button aria-label="关闭 Drawing1">
            <svg viewBox="0 0 10 10" className="size-[10px]" stroke="#777" strokeWidth="2.600">
              <path d="M1 1l8 8M9 1L1 9" />
            </svg>
          </button>
        </div>
      </div>
      <button aria-label="新图形" className="mb-[5px] ml-px">
        <svg viewBox="0 0 28 18" className="h-[18px] w-7">
          <path d="M1 1h17c6 0 9 4 9 16H12C5 17 5 8 1 1z" fill="#888" stroke="#5a5a5a" strokeWidth="1.500" />
          <path d="M14 5v9M9.500 9.500h9" stroke="#b9b9b9" strokeWidth="2.500" />
        </svg>
      </button>
    </div>
  );
}

const std: (string | [string, string])[] = [
  ["new", "新建"], ["open", "打开"], ["save", "保存"], "|",
  ["print", "打印"], ["preview", "打印预览"], ["publish", "发布"], ["globe", "三维打印"], "|",
  ["cut", "剪切"], ["copy", "复制"], ["paste", "粘贴"], ["match", "特性匹配"], ["block", "块编辑器"], "|",
  ["undo", "放弃"], "v", ["redo", "重做"], "v", "|",
  ["pan", "平移"], ["zoomrt", "实时缩放"], ["zoomwin", "窗口缩放"], ["zoomprev", "缩放上一个"], "|",
  ["props", "特性"], ["dcenter", "设计中心"], ["palette", "工具选项板"], ["sheet", "图纸集"], ["help", "帮助"],
];

const serif = "font-['Liberation_Serif',serif] text-[17px]";
const grey = "bg-[#e2e2e2]";

function Toolbars() {
  return (
    <div className="flex flex-col gap-[3px] pt-1 pb-1 pl-px">
      <div className="flex">
        <div className={bar}>
          <Grip />
          {std.map((t, i) =>
            t === "|" ? (
              <Sep key={i} />
            ) : t === "v" ? (
              <button key={i} aria-label="列表" className="flex w-[13px] justify-center">
                <Tri className="scale-75" />
              </button>
            ) : (
              <Tool key={i} name={t[0]} label={t[1]} />
            ),
          )}
          <Combo label="文字样式" value="" className={`w-[199px] ${grey}`} />
          <Bars />
          <span className="w-1" />
          <Tool name="dimstyle" label="标注样式" />
          <Combo label="标注样式" value="ISO-25" className={`w-[118px] pl-[17px] ${grey}`} />
          <Bars />
          <Tool name="tablestyle" label="表格样式" />
          <Combo label="表格样式" value="Standard" className={`w-[119px] pl-[3px] ${grey}`} />
          <Bars />
          <Tool name="leaderstyle" label="多重引线样式" />
          <Combo label="多重引线样式" value="Standard" className={`w-[119px] pl-[17px] ${grey}`} />
        </div>
      </div>
      <div className="flex gap-[3px]">
        <div className={bar}>
          <Grip />
          <Combo label="工作空间" value="AutoCAD 经典" className={`w-[173px] pl-2 ${grey}`} />
          <Tool name="gear" label="工作空间设置" />
          <Tool name="wsbox" label="我的工作空间" />
        </div>
        <div className={bar}>
          <Grip />
          <Tool name="layers" label="图层特性管理器" />
          <Combo
            label="图层"
            value="0"
            className={`w-[299px] pl-[3px] ${grey}`}
            before={
              <span className="flex items-center pr-[3px]">
                <Icon name="bulb" />
                <Icon name="sun" className="size-[15px]" />
                <Icon name="vpfreeze" />
                <Icon name="lock" />
                <span className="ml-[3px] size-[11px] border border-black bg-white" />
              </span>
            }
          />
          <Tool name="layerprev" label="上一个图层" />
          <Combo label="颜色" value="" className={`w-[205px] ${grey}`} />
          <Bars />
          <Combo
            label="线型"
            value="ByLayer"
            className={`w-[159px] pl-1 ${grey}`}
            textClass={`${serif} text-black`}
            before={<span className="mr-[3px] h-px w-[60px] bg-black" />}
          />
          <Bars />
          <Combo
            label="线宽"
            value="ByLayer"
            className={`w-[123px] pl-1 ${grey}`}
            textClass={`${serif} text-black`}
            before={<span className="mr-[2px] h-px w-[34px] bg-black" />}
          />
          <Bars />
          <Combo label="打印样式" value="ByColor" className="w-[118px] bg-[#cdcdcd] pl-[6px]" textClass={`${serif} text-[#888]`} chevron="text-[#aaa]" />
        </div>
      </div>
    </div>
  );
}

const draw: [string, string][] = [
  ["line", "直线"], ["xline", "构造线"], ["pline", "多段线"], ["polygon", "多边形"], ["rect", "矩形"],
  ["arc", "圆弧"], ["circle", "圆"], ["cloud", "修订云线"], ["spline", "样条曲线"], ["ellipse", "椭圆"],
  ["ellarc", "椭圆弧"], ["insblock", "插入块"], ["mkblock", "创建块"], ["point", "点"], ["hatch", "图案填充"],
  ["gradient", "渐变色"], ["region", "面域"], ["table", "表格"], ["mtext", "多行文字"], ["addsel", "添加选定对象"],
];
const modify: [string, string][] = [
  ["erase", "删除"], ["copyobj", "复制"], ["mirror", "镜像"], ["offset", "偏移"], ["array", "阵列"],
  ["move", "移动"], ["rotate", "旋转"], ["scale", "缩放"], ["stretch", "拉伸"], ["trim", "修剪"],
  ["extend", "延伸"], ["breakpt", "打断于点"], ["breakobj", "打断"], ["join", "合并"], ["chamfer", "倒角"],
  ["fillet", "圆角"], ["blend", "光顺曲线"], ["explode", "分解"],
];
const order: [string, string][] = [
  ["front", "前置"], ["back", "后置"], ["above", "置于对象之上"], ["under", "置于对象之下"],
];

const side = "flex w-[25px] flex-col items-center border border-[#333] bg-[#efefef]";

function Drawing() {
  const xs = [76, 198, 319, 440, 562, 683, 804, 926, 1047, 1168, 1290, 1411, 1532, 1654, 1775];
  const ys = [37, 159, 280, 402, 524, 645, 767];
  return (
    <svg className="absolute inset-0 h-full w-full" fill="none" stroke="#fff" shapeRendering="crispEdges" aria-label="图形区域">
      {xs.map((x, i) => (
        <line key={x} x1={x + 0.5} x2={x + 0.5} y1="0" y2="100%" stroke={i % 5 === 3 ? "#343d48" : "#262e37"} />
      ))}
      {ys.map((y, i) => (
        <line key={y} y1={y + 0.5} y2={y + 0.5} x1="0" x2="100%" stroke={i % 5 === 0 ? "#343d48" : "#262e37"} />
      ))}
      <path d="M432 468.500h1004" />
      <path d="M398 3.500h96M446.500 6v45M443 .5h7v6h-7zM443 .5l7 6M450 .5l-7 6" />
      <path d="M19.500 708v50M24 757.500h45M15 752.500h9v9h-9z" />
      <path d="M21 689l6.500 6.500L34 689M27.500 695v8M74 743l13 13M87 743l-13 13" shapeRendering="auto" />
    </svg>
  );
}

function ViewCube() {
  const face = "absolute text-[19px] leading-5 text-[#a9adb2]";
  return (
    <div className="absolute top-[20px] right-[17px] h-[170px] w-[134px]">
      <div className="absolute top-[1px] left-[7px] size-[122px] rounded-full border-[14px] border-[#474d56]" />
      <span className={`${face} top-[-3px] left-[58px]`}>北</span>
      <span className={`${face} top-[54px] left-[2px]`}>西</span>
      <span className={`${face} top-[54px] left-[114px]`}>东</span>
      <span className={`${face} top-[111px] left-[58px]`}>南</span>
      <button className="absolute top-[37px] left-[42px] flex size-[52px] items-center justify-center bg-[#b1b2b4]">
        <span className="flex size-8 items-center justify-center bg-[#a2a8b1] text-[27px] leading-8 text-[#5a606b]">上</span>
      </button>
      <button className="absolute top-[151px] left-[44px] flex h-[18px] w-[48px] items-center gap-[5px] rounded-[4px] border border-[#8d8fa0] bg-[#a5a6b6] pl-1 font-['Open_Sans',sans-serif] text-[11px] text-[#54566a]">
        WCS
        <svg viewBox="0 0 10 6" className="h-[5px] w-[9px]" fill="none" stroke="#8587a0">
          <path d="M.5.5h9L5 5z" />
        </svg>
      </button>
    </div>
  );
}

function Arrow({ dir }: { dir: "up" | "down" | "left" | "right" }) {
  const d = { up: "M1 7l5-5 5 5", down: "M1 3l5 5 5-5", left: "M7 1L3 5l4 4", right: "M4 1l4 4-4 4" }[dir];
  return (
    <svg viewBox="0 0 12 10" className="h-[10px] w-3" fill="none" stroke="#444" strokeWidth="2" aria-hidden="true">
      <path d={d} />
    </svg>
  );
}

function LayoutTabs() {
  const nav: [string, string][] = [
    ["第一个", "M2 1v10M11 1v10L4 6z"],
    ["上一个", "M9 1v10L3 6z"],
    ["下一个", "M3 1v10l6-5z"],
    ["最后一个", "M10 1v10M1 1v10l7-5z"],
  ];
  return (
    <div className="flex h-[20px] items-stretch border-b-2 border-white bg-[#f0f0f0] text-[14px] leading-[18px] text-black">
      {nav.map(([l, d]) => (
        <button key={l} aria-label={l} className="flex w-[18px] items-center justify-center border-r border-[#999]">
          <svg viewBox="0 0 12 12" className="size-3" fill="#666" stroke="#666">
            <path d={d} />
          </svg>
        </button>
      ))}
      <div className="relative w-[60px]">
        <svg viewBox="0 0 60 18" className="absolute inset-0 h-full w-full" aria-hidden="true">
          <path d="M0 0h60l-8 18H7z" fill="#212830" />
        </svg>
        <button className="relative w-full pr-[2px] text-center text-white">模型</button>
      </div>
      {["布局1", "布局2"].map((t) => (
        <div key={t} className="relative w-[58px]">
          <svg viewBox="0 0 58 18" className="absolute inset-0 h-full w-full" fill="none" stroke="#555" aria-hidden="true">
            <path d="M57 0l-8 18H-2l-3-7" />
          </svg>
          <button className="relative w-full pr-[13px] text-center">{t}</button>
        </div>
      ))}
      <div className="ml-auto flex w-[645px] items-center border-l-4 border-[#bbb] pl-2">
        <Arrow dir="left" />
        <span className="ml-[3px] h-4 w-[21px] bg-[#cdcdcd]" />
        <span className="mr-[27px] ml-auto">
          <Arrow dir="right" />
        </span>
      </div>
    </div>
  );
}

function Workspace() {
  return (
    <div className="flex min-h-0 flex-1 items-stretch gap-[4px]">
      <div className="w-[26px] shrink-0">
        <div className={side}>
          <TopGrip />
          {draw.map(([n, l]) => (
            <Tool key={n} name={n} label={l} />
          ))}
        </div>
      </div>
      <main className="flex min-w-0 flex-1 flex-col border-t border-l border-[#a9a9a9]">
        <div className="flex min-h-0 flex-1">
          <div className="relative min-w-0 flex-1 overflow-hidden bg-[#212830]">
            <Drawing />
            <p className="relative pt-[3px] pl-[3px] text-[13px] leading-5 text-[#d2d5d8]">[−][俯视][二维线框]</p>
            <ViewCube />
            <span className="absolute right-[224px] bottom-[59px] h-[36px] w-6 rounded-full bg-[#cbcdcf]" />
            <span className="absolute right-[193px] bottom-[57px] h-[36px] w-[26px] rounded-full bg-[#cbcdcf]" />
          </div>
          <div className="flex w-[23px] flex-col items-center border-r-2 border-white bg-[#efefef] pt-[7px] pb-[6px]">
            <Arrow dir="up" />
            <span className="mt-auto mb-[5px] h-[21px] w-[19px] bg-[#cdcdcd]" />
            <Arrow dir="down" />
          </div>
        </div>
        <LayoutTabs />
      </main>
      <div className="flex w-[28px] shrink-0 flex-col">
        <div className={side}>
          <TopGrip />
          {modify.map(([n, l]) => (
            <Tool key={n} name={n} label={l} />
          ))}
        </div>
        <div className={side}>
          <TopGrip />
          {order.map(([n, l]) => (
            <Tool key={n} name={n} label={l} />
          ))}
          <span className="my-[2px] h-px w-[19px] bg-[#999]" />
          <Tool name="textfront" label="文字前置" />
          <Tool name="hatchback" label="图案填充后置" />
        </div>
      </div>
    </div>
  );
}

function CommandLine() {
  return (
    <div className="mt-[4px] flex h-[56px] shrink-0 pr-[2px]">
      <div className="flex w-[29px] flex-col items-center bg-linear-to-b from-[#777] to-[#444] pt-1">
        <span className="h-[7px] w-[22px] bg-[radial-gradient(#bbb_1px,transparent_1px)] bg-[length:4px_4px]" />
        <button aria-label="关闭命令行" className="mt-[11px]">
          <svg viewBox="0 0 10 10" className="size-[10px]" stroke="#fff" strokeWidth="2.400">
            <path d="M1 0l8 10M9 0L1 10" />
          </svg>
        </button>
        <button aria-label="自定义" className="mt-[13px] self-start pl-[5px]">
          <svg viewBox="0 0 12 8" className="h-2 w-3" fill="none" stroke="#fff" strokeWidth="2">
            <path d="M4 1.500c4-1 5 0 5 5.500H6V4.500h3M0 6.500h3" />
          </svg>
        </button>
      </div>
      <div className="flex flex-1 flex-col">
        <p className="flex h-[28px] items-center border-b border-[#777] bg-[#c8c8c8] pl-[3px] text-[20px] whitespace-pre text-black">
          <span>命令</span>
          <span className="font-['DejaVu_Sans_Mono',monospace] text-[18px]">{": _.erase "}</span>
          <span>找到</span>
          <span className="font-['DejaVu_Sans_Mono',monospace] text-[18px]"> 1 </span>
          <span>个</span>
        </p>
        <div className="flex h-[27px] items-center bg-white pl-[6px]">
          <button aria-label="最近使用的命令" className="flex items-center gap-1">
            <svg viewBox="0 0 18 17" className="h-[17px] w-[18px]" fill="none">
              <rect x=".5" y=".5" width="17" height="16" fill="#d5d8de" stroke="#aaa" />
              <path d="M3 4l5 4-5 4M9 13h6" stroke="#555" strokeWidth="1.500" />
            </svg>
            <Tri className="text-[#777]" />
          </button>
          <input aria-label="命令" placeholder="键入命令" className="h-full flex-1 bg-transparent pl-[10px] text-[20px] italic outline-none placeholder:text-[#999]" />
        </div>
      </div>
    </div>
  );
}

function ImeBar() {
  return (
    <div className="absolute right-px bottom-[60px] z-30 flex h-[37px] w-[125px] items-center justify-between rounded-[3px] bg-[#fbfcfe] pr-[8px] pl-[10px] text-[#0a5cc4] shadow-[0_0_3px_rgba(0,0,0,0.4)]">
      <button aria-label="表情">
        <svg viewBox="0 0 20 20" className="size-5" fill="none" stroke="currentColor" strokeWidth="2">
          <circle cx="10" cy="10" r="8.500" />
          <path d="M6 11c1 4 7 4 8 0M7 6v2M13 6v2" />
        </svg>
      </button>
      <button aria-label="手写">
        <svg viewBox="0 0 20 20" className="size-5" fill="none" stroke="currentColor" strokeWidth="2.200">
          <path d="M2 18l1-7 8-8c1-1 2-1 3 0l3 3c1 1 1 2 0 3l-8 8zM4 11l5 5" />
        </svg>
      </button>
      <button aria-label="语音">
        <svg viewBox="0 0 16 20" className="h-5 w-4" fill="none" stroke="currentColor" strokeWidth="2">
          <rect x="5" y="1" width="6" height="11" rx="3" fill="currentColor" />
          <path d="M1.500 9c0 8 13 8 13 0M8 15v4M4 19h8" />
        </svg>
      </button>
      <button aria-label="工具箱">
        <svg viewBox="0 0 18 18" className="size-[18px]" fill="currentColor">
          <path d="M1 1h7v7H1zM1 10h7v7H1zM10 10h7v7h-7z" />
          <path d="M11 2h5v5h-5z" fill="none" stroke="currentColor" strokeWidth="1.600" />
        </svg>
      </button>
    </div>
  );
}

function Watermark() {
  return (
    <div className="absolute right-[106px] bottom-[26px] z-40 flex h-[160px] w-[340px] items-center gap-[24px] bg-[#212f57] px-[26px] text-[#cbccce]">
      <svg viewBox="0 0 66 68" className="h-[68px] w-[66px] shrink-0" fill="none" stroke="currentColor" strokeWidth="5" strokeLinecap="round">
        <path d="M22 52c-2 2-8 1-8-4V10c0-6 4-8 10-5l31 18c8 5 8 13 0 18L26 63C14 69 4 62 3 50" />
        <path d="M3 50V19c0-4 1-6 3-9" strokeWidth="4" />
        <path d="M26 27v12l11-6z" fill="currentColor" strokeWidth="2" />
        <path d="M43 27v12" strokeWidth="3" strokeLinecap="butt" />
      </svg>
      <div className="flex flex-1 flex-col gap-[4px]">
        <div className="flex justify-between text-[44px] leading-[46px] font-bold">
          <span>溜</span>
          <span>溜</span>
          <span>自</span>
          <span>学</span>
        </div>
        <p className="font-['DejaVu_Sans',sans-serif] text-[23px] leading-6 font-light">zixue.3D66.COM</p>
      </div>
    </div>
  );
}

export default function App() {
  return (
    <div className="relative flex h-screen flex-col overflow-hidden bg-[#686868] font-['Noto_Sans','Noto_Sans_CJK_SC',sans-serif]">
      <header className="relative shrink-0">
        <TitleBar />
        <MenuBar />
        <button aria-label="应用程序菜单" className="absolute top-0 left-0 flex h-[41px] w-[41px] items-center justify-center gap-px border border-black bg-linear-to-b from-[#b5b5b5] to-[#777]">
          <svg viewBox="0 0 24 28" className="h-7 w-6" aria-hidden="true">
            <path d="M11 0h3l9 25-7 2-2-5H9l-3 5-6-2z" fill="#d22a1c" />
            <path d="M11 0L0 25l6 2 6-13z" fill="#8f160e" />
            <path d="M14 0l9 25-7 2-4-13z" fill="#e4432f" />
            <path d="M9 19l3-6 3 6-3 1z" fill="#6e100a" />
          </svg>
          <Tri className="scale-75" />
        </button>
      </header>
      <FileTabs />
      <Toolbars />
      <Workspace />
      <CommandLine />
      <footer className="mt-px flex h-[26px] shrink-0 flex-col border-t-2 border-black">
        <div className="flex flex-1 items-end justify-between bg-linear-to-b from-[#8d8d8d] to-[#7c7c7c] pl-[7px] text-[15px] leading-[19px] text-black">
          <span>创建线性标注</span>
          <span className="size-3 bg-[radial-gradient(#ddd_1px,transparent_1px)] bg-[length:4px_4px] [clip-path:polygon(100%_0,100%_100%,0_100%)]" />
        </div>
        <div className="h-1 bg-[#4a3a34]" />
      </footer>
      <ImeBar />
      <Watermark />
    </div>
  );
}
